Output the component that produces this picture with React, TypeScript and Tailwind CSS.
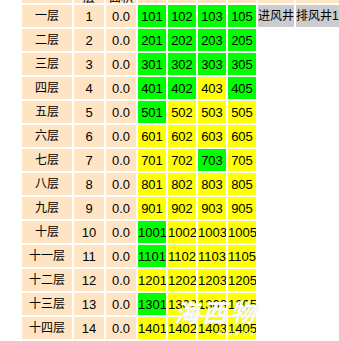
import React from "react";

type Room = { no: string; on: boolean };

const FLOORS = [
  "一层", "二层", "三层", "四层", "五层", "六层", "七层",
  "八层", "九层", "十层", "十一层", "十二层", "十三层", "十四层",
];

// rooms that are lit (green), everything else is yellow
const GREEN: Record<number, string[]> = {
  1: ["01", "02", "03", "05"],
  2: ["01", "02", "03", "05"],
  3: ["01", "02", "03", "05"],
  4: ["01", "02", "05"],
  5: ["01"],
  7: ["03"],
  10: ["01"],
  11: ["01"],
  13: ["01"],
};

function roomsFor(floor: number): Room[] {
  return ["01", "02", "03", "05"].map((s) => ({
    no: `${floor}${s}`,
    on: (GREEN[floor] || []).includes(s),
  }));
}

export default function App() {
  return (
    <div className="relative h-[341px] w-[339px] overflow-hidden bg-white font-['Liberation_Sans','Noto_Sans_CJK_SC',sans-serif] text-black">
      <table className="ml-[20px] mt-[-21px] w-[324px] table-fixed border-separate border-spacing-[2px]">
        <thead>
          <tr className="h-[22px]">
            <th className="w-[50px] bg-[#ffe4c4] p-0" />
            <th className="w-[30px] bg-[#ffe4c4] p-0 align-bottom text-[12px] font-normal leading-[10px]">
              层
            </th>
            <th className="w-[30px] bg-[#ffe4c4] p-0 align-bottom text-[12px] font-normal leading-[10px]">
              面积
            </th>
            <th className="w-[28px] bg-[#ffe4c4] p-0" />
            <th className="w-[28px] bg-[#ffe4c4] p-0" />
            <th className="w-[28px] bg-[#ffe4c4] p-0" />
            <th className="w-[28px] bg-[#ffe4c4] p-0" />
            <th className="w-[36px] bg-[#ffe4c4] p-0" />
            <th className="w-[46px] bg-[#ffe4c4] p-0" />
          </tr>
        </thead>
        <tbody>
          {FLOORS.map((name, i) => {
            const floor = i + 1;
            return (
              <tr key={name} className="h-[22px]">
                <td className="bg-[#ffe4c4] p-0 text-center text-[12px] leading-none">
                  {name}
                </td>
                <td className="bg-[#ffe4c4] p-0 text-center text-[13px] leading-none">
                  {floor}
                </td>
                <td className="bg-[#ffe4c4] p-0 text-center text-[13px] leading-none">
                  0.0
                </td>
                {roomsFor(floor).map((r) => (
                  <td
                    key={r.no}
                    className={`overflow-hidden whitespace-nowrap p-0 text-center text-[13px] leading-none ${
                      r.on ? "bg-[#00ff00]" : "bg-[#ffff00]"
                    }`}
                  >
                    {r.no}
                  </td>
                ))}
                {floor === 1 ? (
                  <>
                    <td className="whitespace-nowrap bg-[#cccccc] p-0 text-left text-[12px] leading-none">
                      进风井
                    </td>
                    <td className="whitespace-nowrap bg-[#cccccc] p-0 text-left text-[12px] leading-none">
                      排风井1
                    </td>
                  </>
                ) : null}
              </tr>
            );
          })}
        </tbody>
      </table>

      {/* watermark */}
      <div className="absolute left-[174px] top-[301px] text-[25px] font-bold italic leading-none tracking-[3px] text-white/90 [text-shadow:0_0_1px_#cccccc]">
        海西物
      </div>
      <div className="absolute left-[218px] top-[329px] text-[9px] leading-none tracking-[1px] text-white/70">
        www.hx
      </div>
    </div>
  );
}
